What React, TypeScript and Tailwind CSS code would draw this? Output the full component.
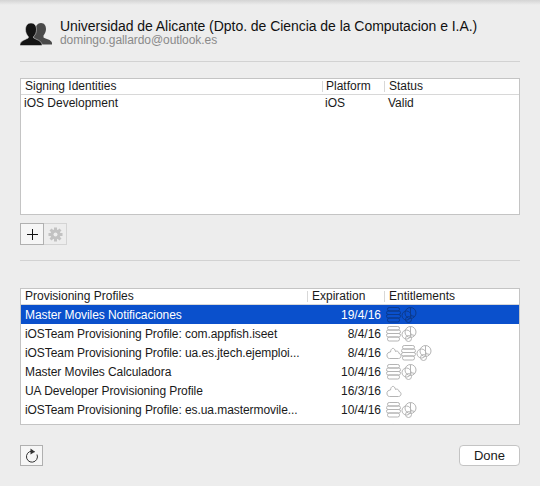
const FONT = "font-['Liberation_Sans',Arial,sans-serif]";

type Ent = "cloud" | "stack" | "circles";

interface Profile {
  name: string;
  date: string;
  icons: Ent[];
}

const PROFILES: Profile[] = [
  { name: "Master Moviles Notificaciones", date: "19/4/16", icons: ["stack", "circles"] },
  { name: "iOSTeam Provisioning Profile: com.appfish.iseet", date: "8/4/16", icons: ["stack", "circles"] },
  { name: "iOSTeam Provisioning Profile: ua.es.jtech.ejemploi...", date: "8/4/16", icons: ["cloud", "stack", "circles"] },
  { name: "Master Moviles Calculadora", date: "10/4/16", icons: ["stack", "circles"] },
  { name: "UA Developer Provisioning Profile", date: "16/3/16", icons: ["cloud"] },
  { name: "iOSTeam Provisioning Profile: es.ua.mastermovile...", date: "10/4/16", icons: ["stack", "circles"] },
  { name: "", date: "", icons: ["cloud"] },
];

function PeopleIcon() {
  return (
    <svg width="32" height="24" viewBox="0 0 32 24">
      <path d="M21 1c3.500 0 5 3 5 6 0 3-1.300 5-2.500 6.500v2c2 1.500 8 2 8.500 5.500v1.500H14v-10c1-1 1.500-3 1.500-5 0-3.500 2-6.500 5.500-6.500z" fill="#4a4a4a" />
      <path d="M11 1c3.800 0 5.500 3 5.500 6.500 0 3-1.300 5.500-2.800 7v1.500c2.500 1.500 7.300 2.500 8.300 6v1.500H0v-1.500c1-3.500 5.800-4.500 8.300-6v-1.500c-1.500-1.500-2.800-4-2.800-7C5.500 4 7.200 1 11 1z" fill="#141414" stroke="#ededed" strokeWidth="0.5" />
    </svg>
  );
}

function GearIcon() {
  const teeth = [0, 45, 90, 135];
  return (
    <svg width="15" height="15" viewBox="0 0 15 15">
      {teeth.map((a) => (
        <rect key={a} x="6" y="0.500" width="3" height="14" fill="#c2c2c2" transform={`rotate(${a} 7.500 7.500)`} />
      ))}
      <circle cx="7.500" cy="7.500" r="5" fill="#c2c2c2" />
      <circle cx="7.500" cy="7.500" r="2" fill="#ededed" />
    </svg>
  );
}

function ReloadIcon() {
  return (
    <svg width="16" height="16" viewBox="0 0 16 16" fill="none" stroke="#333">
      <path d="M10.500 3.800A5.500 5.500 0 1 0 13 6.500" />
      <path d="M6.500 .5l4.500 3.300-4.500 2.700z" fill="#333" stroke="none" />
    </svg>
  );
}

function EntIcon({ kind, selected }: { kind: Ent; selected: boolean }) {
  const c = selected ? "#0c3a8c" : "#b4b4b4";
  if (kind === "cloud") {
    return (
      <svg width="16" height="16" viewBox="0 0 16 16" fill="none" stroke={c} className="mr-[-1px]">
        <path d="M3.500 13.500h9c3 0 3.500-4.500 .5-5 0-2-2-3-3.500-2C8.500 2 5 2.500 4.500 7 2.500 7 .5 8.500 1 11c.3 1.500 1.200 2.500 2.500 2.500z" />
      </svg>
    );
  }
  if (kind === "stack") {
    return (
      <svg width="15" height="16" viewBox="0 0 15 16" fill="none" stroke={c}>
        <rect x="1.500" y="0.500" width="12" height="3.500" rx="1.700" />
        <rect x="0.500" y="4" width="14" height="3.500" rx="1.700" />
        <rect x="0.500" y="7.500" width="14" height="3.500" rx="1.700" />
        <rect x="1.500" y="11" width="12" height="4" rx="1.800" />
      </svg>
    );
  }
  return (
    <svg width="16" height="16" viewBox="0 0 16 16" fill="none" stroke={c}>
      <circle cx="9.500" cy="6" r="5.500" />
      <circle cx="5.500" cy="8.500" r="4.500" />
      <circle cx="7.500" cy="12.500" r="3" />
      <path d="M9.500 .5v9.500M14 9.500l-4.500-1" />
    </svg>
  );
}

function HeaderCell({ label, className }: { label: string; className: string }) {
  return (
    <div className={`flex h-[11px] items-center border-l border-[#d8d8d8] ${className}`}>
      <span>{label}</span>
    </div>
  );
}

export default function App() {
  return (
    <div className={`${FONT} relative h-[486px] w-[540px] overflow-hidden bg-[#ededed] text-[12px] text-[#1a1a1a]`}>
      <div className="h-[5px] bg-gradient-to-b from-[#d4d4d4] to-[#ededed]" />

      <div className="flex h-[56px] flex-col px-[20px]">
        <div className="flex items-start gap-[8px] pt-[13px]">
          <div className="pt-[4px]">
            <PeopleIcon />
          </div>
          <div className="flex flex-col">
            <span className="text-[14px] leading-[16px] tracking-[-0.045px] text-[#111]">
              Universidad de Alicante (Dpto. de Ciencia de la Computacion e I.A.)
            </span>
            <span className="text-[12px] leading-[12px] tracking-[-0.07px] text-[#8a8a8a]">
              domingo.gallardo@outlook.es
            </span>
          </div>
        </div>
      </div>
      <div className="mx-[20px] h-[1px] bg-[#d2d2d2]" />

      <div className="mx-[20px] mt-[16px] h-[137px] border border-[#c4c4c4] bg-white">
        <div className="flex h-[16px] items-center border-b border-[#d8d8d8] pb-[1px]">
          <div className="w-[301px] pl-[4px]">Signing Identities</div>
          <HeaderCell label="Platform" className="w-[62px] pl-[3px]" />
          <HeaderCell label="Status" className="flex-1 pl-[4px]" />
        </div>
        <div className="flex h-[17px] items-center pb-[2px]">
          <div className="w-[304px] pl-[3px]">iOS Development</div>
          <div className="w-[63px]">iOS</div>
          <div className="flex-1">Valid</div>
        </div>
      </div>

      <div className="mx-[20px] mt-[8px] flex h-[22px]">
        <div className="flex w-[24px] items-center justify-center border border-[#b0b0b0] bg-[#f6f6f6]">
          <svg width="13" height="13" viewBox="0 0 13 13" stroke="#111">
            <path d="M6.500 1v11M1 6.500h11" />
          </svg>
        </div>
        <div className="flex w-[23px] items-center justify-center border border-l-0 border-[#d4d4d4]">
          <GearIcon />
        </div>
      </div>

      <div className="mx-[20px] mt-[15px] h-[1px] bg-[#d2d2d2]" />

      <div className="mx-[20px] mt-[27px] h-[137px] overflow-hidden border border-[#c4c4c4] bg-white">
        <div className="flex h-[16px] items-center border-b border-[#d8d8d8] pb-[1px]">
          <div className="w-[286px] pl-[4px]">Provisioning Profiles</div>
          <HeaderCell label="Expiration" className="w-[77px] pl-[4px]" />
          <HeaderCell label="Entitlements" className="flex-1 pl-[4px]" />
        </div>
        {PROFILES.map((p, i) => {
          const selected = i === 0;
          return (
            <div
              key={i}
              className={`flex h-[19px] items-center ${selected ? "bg-[#0a50cc] text-white" : ""}`}
            >
              <div className="w-[287px] truncate pl-[4px] tracking-[-0.07px]">{p.name}</div>
              <div className="w-[73px] text-right">{p.date}</div>
              <div className="ml-[5px] flex">
                {p.icons.map((k, j) => (
                  <EntIcon key={j} kind={k} selected={selected} />
                ))}
              </div>
            </div>
          );
        })}
      </div>

      <div className="mx-[20px] mt-[20px] flex items-start justify-between">
        <div className="flex h-[21px] w-[23px] items-center justify-center border border-[#b0b0b0] bg-[#f6f6f6]">
          <ReloadIcon />
        </div>
        <div className="flex h-[21px] w-[61px] items-center justify-center rounded-[4px] border border-[#c4c4c4] bg-white text-[13px]">
          Done
        </div>
      </div>
    </div>
  );
}
